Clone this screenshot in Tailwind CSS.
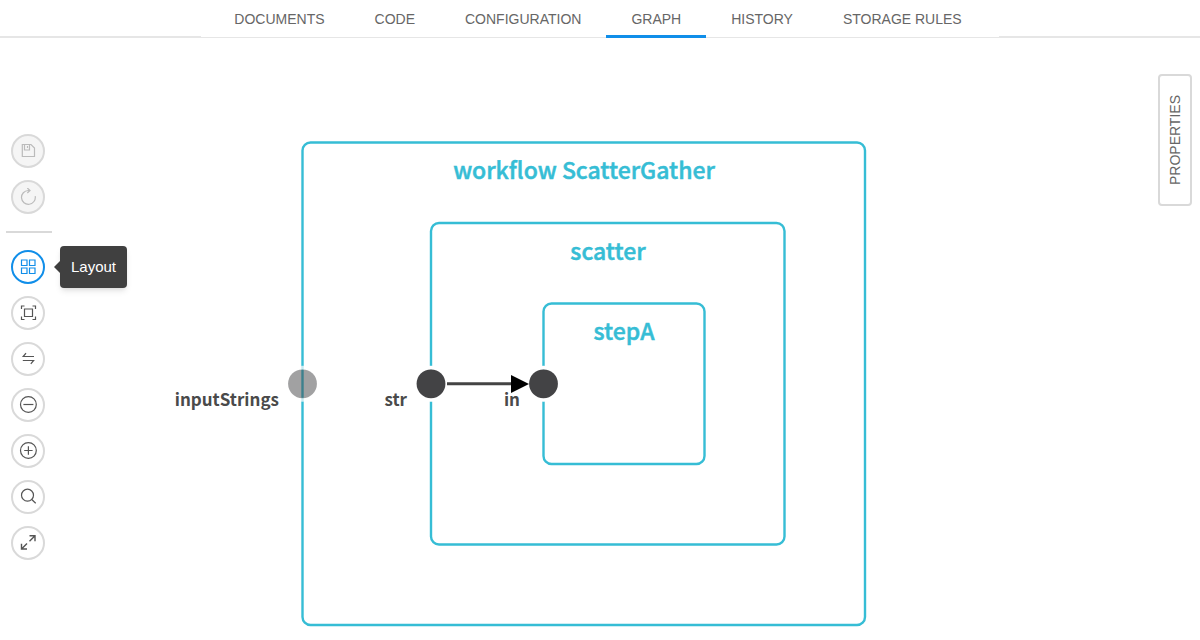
<!DOCTYPE html>
<html lang="en">
<head>
<meta charset="utf-8">
<meta name="viewport" content="width=device-width, initial-scale=1">
<title>Workflow graph</title>
<script src="https://cdn.jsdelivr.net/npm/@tailwindcss/browser@4"></script>
</head>
<body class="flex min-h-screen flex-col bg-white font-['Liberation_Sans',Arial,sans-serif] text-sm text-[#666]">
<header class="flex">
  <div class="h-[38px] flex-1 border-b-2 border-[#e6e6e6]"></div>
  <nav class="flex h-[38px] border-b border-[#e6e6e6] pr-3 pl-2" aria-label="Pipeline sections">
    <a href="#documents" class="flex h-[38px] items-center px-[25px]">DOCUMENTS</a>
    <a href="#code" class="flex h-[38px] items-center px-[25px]">CODE</a>
    <a href="#configuration" class="flex h-[38px] items-center px-[25px]">CONFIGURATION</a>
    <a href="#graph" aria-current="page" class="flex h-[38px] items-center border-b-3 border-[#108ee9] px-[25px] pt-[3px]">GRAPH</a>
    <a href="#history" class="flex h-[38px] items-center px-[25px]">HISTORY</a>
    <a href="#rules" class="flex h-[38px] items-center px-[25px]">STORAGE RULES</a>
  </nav>
  <div class="h-[38px] flex-1 border-b-2 border-[#e6e6e6]"></div>
</header>
<main class="flex flex-1 items-start">
  <aside class="flex w-14 shrink-0 flex-col items-center gap-3 pt-24" aria-label="Graph tools">
    <button type="button" disabled aria-label="Save" class="flex size-[34px] items-center justify-center rounded-full border-2 border-[#d9d9d9] bg-[#f5f5f5] text-[#bbb]">
      <svg class="size-[18px]" viewBox="0 0 18 18" fill="none" stroke="currentColor" stroke-width="1.200"><path d="M3.300 2.500h8.700l3.500 3.500v8.500H3.300zM5.500 2.500v5.500h5V2.500M8.500 4v2"/></svg>
    </button>
    <button type="button" disabled aria-label="Revert" class="flex size-[34px] items-center justify-center rounded-full border-2 border-[#d9d9d9] bg-[#f5f5f5] text-[#bbb]">
      <svg class="size-[18px]" viewBox="0 0 18 18" fill="none" stroke="currentColor" stroke-width="1.200"><path d="M16.200 8.200A6.900 6.900 0 1 1 9.300 2.500h1.500M8.300 0l2.700 2.500-2.700 2.500"/></svg>
    </button>
    <hr class="my-[5px] ml-px h-0.5 w-[46px] border-0 bg-[#d9d9d9]">
    <div class="relative">
      <button type="button" aria-label="Layout" aria-describedby="tip" class="flex size-[34px] items-center justify-center rounded-full border-2 border-[#108ee9] bg-white text-[#108ee9]">
        <svg class="size-[18px]" viewBox="0 0 18 18" fill="none" stroke="currentColor" stroke-width="1.200"><path d="M2.500 2h5.500v5.500h-5.500zM10.500 2h5.500v5.500h-5.500zM2.500 10h5.500v5.500h-5.500zM10.500 10h5.500v5.500h-5.500z"/></svg>
      </button>
      <div id="tip" role="tooltip" class="absolute top-1/2 left-full ml-[9px] flex -translate-y-1/2 items-center text-[15px] text-white">
        <span class="h-0 w-0 border-y-6 border-r-6 border-y-transparent border-r-[#404040]"></span>
        <span class="flex h-[42px] items-center rounded bg-[#404040] px-[11px] shadow-md">Layout</span>
      </div>
    </div>
    <button type="button" aria-label="Fit to screen" class="flex size-[34px] items-center justify-center rounded-full border-2 border-[#d9d9d9] bg-white text-[#555]">
      <svg class="size-[18px]" viewBox="0 0 18 18" fill="none" stroke="currentColor" stroke-width="1.200"><path d="M5.500 5h8v7.500h-8zM2.500 5V2h3M13.500 2h3v3M2.500 12.500v3h3M13.500 15.500h3v-3"/></svg>
    </button>
    <button type="button" aria-label="Show links" class="flex size-[34px] items-center justify-center rounded-full border-2 border-[#d9d9d9] bg-white text-[#555]">
      <svg class="size-[18px]" viewBox="0 0 18 18" fill="none" stroke="currentColor" stroke-width="1.200"><path d="M15 6.500H4.200L7 3.200M3.800 10.500H14.600L11.800 13.800"/></svg>
    </button>
    <button type="button" aria-label="Zoom out" class="flex size-[34px] items-center justify-center rounded-full border-2 border-[#d9d9d9] bg-white text-[#555]">
      <svg class="size-[18px]" viewBox="0 0 18 18" fill="none" stroke="currentColor" stroke-width="1.200"><circle cx="9.400" cy="8.500" r="7.900"/><path d="M4.400 8.500h10"/></svg>
    </button>
    <button type="button" aria-label="Zoom in" class="flex size-[34px] items-center justify-center rounded-full border-2 border-[#d9d9d9] bg-white text-[#555]">
      <svg class="size-[18px]" viewBox="0 0 18 18" fill="none" stroke="currentColor" stroke-width="1.200"><circle cx="9.400" cy="8.500" r="7.900"/><path d="M5.200 8.500h8.400M9.400 4.300v8.400"/></svg>
    </button>
    <button type="button" aria-label="Search" class="flex size-[34px] items-center justify-center rounded-full border-2 border-[#d9d9d9] bg-white text-[#555]">
      <svg class="size-[18px]" viewBox="0 0 18 18" fill="none" stroke="currentColor" stroke-width="1.200"><circle cx="8.500" cy="7.200" r="6"/><path d="M12.500 11.200l4.200 4"/></svg>
    </button>
    <button type="button" aria-label="Fullscreen" class="flex size-[34px] items-center justify-center rounded-full border-2 border-[#d9d9d9] bg-white text-[#555]">
      <svg class="size-[18px]" viewBox="0 0 18 18" fill="none" stroke="currentColor" stroke-width="1.400"><path d="M10.500 1.800h5.500v5.500M16 1.800l-5.500 5.500M2.500 9.700v5.300h5.500M2.500 15L8 9.500"/></svg>
    </button>
  </aside>
  <section class="min-w-0 flex-1" aria-label="Workflow graph">
    <svg class="block h-[602px] w-[1100px] max-w-full font-['Noto_Sans_CJK_SC',sans-serif] font-medium" viewBox="56 38 1100 602" preserveAspectRatio="xMinYMin slice" fill="none">
      <g stroke="#36bdd5" stroke-width="2.400">
        <rect x="302.500" y="142.500" width="562.500" height="482.500" rx="8"/>
        <rect x="431" y="223" width="353.500" height="321.500" rx="8"/>
        <rect x="543.500" y="303.500" width="161" height="160.500" rx="8"/>
      </g>
      <g stroke="#fff" stroke-width="4">
        <circle cx="302.500" cy="383.800" r="16" stroke-opacity=".7"/>
        <circle cx="431" cy="383.800" r="16"/>
        <circle cx="543.500" cy="383.800" r="16"/>
      </g>
      <path d="M447 383.800h66" stroke="#444" stroke-width="3"/>
      <path d="M511 375v18l18-9z" fill="#000"/>
      <circle cx="302.500" cy="383.800" r="14.400" fill="#434345" fill-opacity=".5"/>
      <circle cx="431" cy="383.800" r="14.400" fill="#434345"/>
      <circle cx="543.500" cy="383.800" r="14.400" fill="#434345"/>
      <g fill="#36bdd5" stroke="#36bdd5" stroke-width=".5" font-size="23" text-anchor="middle">
        <text x="584" y="179">workflow ScatterGather</text>
        <text x="608" y="260">scatter</text>
        <text x="624" y="340">stepA</text>
      </g>
      <g class="font-bold" fill="#4a4a4a" font-size="17" text-anchor="end">
        <text x="279" y="406">inputStrings</text>
        <text x="407" y="406">str</text>
        <text x="520" y="406">in</text>
      </g>
    </svg>
  </section>
  <button type="button" class="mt-9 mr-2 flex h-[132px] w-[34px] shrink-0 items-center justify-center rounded border-2 border-[#d9d9d9] bg-white"><span class="rotate-180 [writing-mode:vertical-rl]">PROPERTIES</span></button>
</main>
</body>
</html>
